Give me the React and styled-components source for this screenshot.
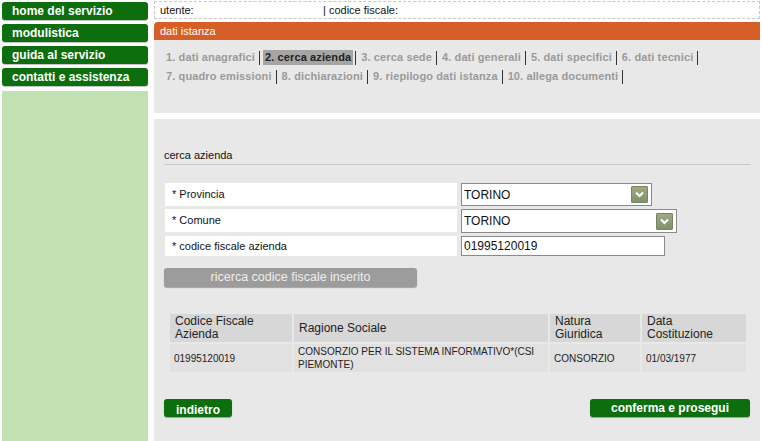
import React from "react";
import styled, { createGlobalStyle } from "styled-components";

const GlobalStyle = createGlobalStyle`
  body {
    margin: 0;
    background: #fff;
    font-family: "Liberation Sans", Arial, sans-serif;
  }
`;

const Page = styled.div`
  display: flex;
  width: 762px;
  height: 441px;
  overflow: hidden;
`;

const Sidebar = styled.div`
  width: 146px;
  margin-left: 2px;
  padding-top: 2px;
  display: flex;
  flex-direction: column;
  gap: 4px;
`;

const MenuButton = styled.div`
  height: 18px;
  line-height: 18px;
  background: #0c6e0c;
  color: #fff;
  font-weight: bold;
  font-size: 12px;
  padding-left: 10px;
  border-radius: 3px;
  box-shadow: 0 1px 1px rgba(0, 0, 0, 0.25);
`;

const SideFill = styled.div`
  flex: 1;
  margin-top: 1px;
  background: #c2e1b2;
`;

const Main = styled.div`
  width: 606px;
  margin-left: 6px;
  display: flex;
  flex-direction: column;
`;

const UserBar = styled.div`
  margin-top: 1px;
  height: 16px;
  border: 1px dashed #c8c8c8;
  display: flex;
  align-items: center;
  font-size: 11px;
  color: #111;
  padding-left: 5px;
`;

const UserField = styled.span`
  width: ${(p) => p.$w}px;
`;

const TitleBar = styled.div`
  margin-top: 3px;
  height: 18px;
  line-height: 18px;
  background: #d55f27;
  color: #fff;
  font-size: 11px;
  padding-left: 6px;
  border-radius: 4px 0 0 0;
`;

const StepsWrap = styled.div`
  background: #e8e8e8;
`;

const StepsPanel = styled.div`
  height: 63px;
  padding: 10px 0 0 10px;
  display: flex;
  flex-wrap: wrap;
  align-content: flex-start;
  row-gap: 4px;
  width: 565px;
`;

const StepItem = styled.span`
  display: inline-flex;
  align-items: center;
`;

const Step = styled.span`
  font-size: 11px;
  font-weight: bold;
  letter-spacing: 0.12px;
  color: ${(p) => (p.$active ? "#222" : "#9a9a9a")};
  background: ${(p) => (p.$active ? "#a5a5a5" : "transparent")};
  padding: 1px 2px;
  line-height: 13px;
`;

const Sep = styled.span`
  display: inline-block;
  width: 1px;
  height: 14px;
  background: #333;
  margin: 1px 3px 0 2px;
`;

const ContentPanel = styled.div`
  margin-top: 6px;
  flex: 1;
  background: #e8e8e8;
  padding: 30px 10px 0 10px;
`;

const SectionTitle = styled.div`
  font-size: 11px;
  color: #111;
  padding-bottom: 3px;
  border-bottom: 1px solid #c9c9c9;
  width: 586px;
`;

const FormGrid = styled.div`
  margin-top: 18px;
  margin-left: 1px;
  display: grid;
  grid-template-columns: 292px auto;
  row-gap: 3px;
  align-items: start;
`;

const Label = styled.div`
  background: #fff;
  font-size: 11px;
  color: #111;
  padding-left: 7px;
  height: ${(p) => p.$h}px;
  line-height: ${(p) => p.$h}px;
`;

const Field = styled.div`
  margin-left: 4px;
  width: ${(p) => p.$w}px;
  height: ${(p) => p.$h}px;
  box-sizing: border-box;
  border: 1px solid #8a8a8a;
  background: #fff;
  display: flex;
  align-items: center;
  justify-content: space-between;
  font-size: 12px;
  color: #111;
  padding: 0 3px 0 2px;
`;

const Arrow = styled.span`
  width: 15px;
  height: 15px;
  background: linear-gradient(#9ba985, #83926a);
  border: 1px solid #76845f;
  border-radius: 1px;
  display: flex;
  align-items: center;
  justify-content: center;
`;

const GrayButton = styled.div`
  margin-top: 12px;
  width: 253px;
  height: 19px;
  line-height: 19px;
  background: #9c9c9c;
  color: #eee;
  font-size: 12.5px;
  text-align: center;
  border-radius: 3px;
  box-shadow: 0 1px 1px rgba(0, 0, 0, 0.3);
`;

const ResultTable = styled.table`
  margin-top: 25px;
  margin-left: 4px;
  border-collapse: separate;
  border-spacing: 2px;
  width: 580px;
  table-layout: fixed;
`;

const Th = styled.th`
  background: #d7d7d7;
  font-weight: normal;
  font-size: 12px;
  color: #222;
  text-align: left;
  padding: 1px 5px;
  height: 26px;
  line-height: 13px;
  width: ${(p) => p.$w}px;
`;

const Td = styled.td`
  background: #e1e1e1;
  font-size: 10px;
  color: #222;
  padding: 1px 4px;
  height: 26px;
  line-height: 13px;
`;

const Footer = styled.div`
  display: flex;
  justify-content: space-between;
  margin-top: 25px;
  width: 586px;
`;

const GreenButton = styled.div`
  width: ${(p) => p.$w}px;
  height: 18px;
  line-height: ${(p) => (p.$low ? 22 : 18)}px;
  background: #0c6e0c;
  color: #fff;
  font-weight: bold;
  font-size: 12px;
  text-align: center;
  border-radius: 3px;
  box-shadow: 0 1px 1px rgba(0, 0, 0, 0.3);
`;

const Chevron = () => (
  <svg width="9" height="7" viewBox="0 0 9 7">
    <path d="M1 1.5 L4.5 5 L8 1.5" stroke="#fff" strokeWidth="2" fill="none" />
  </svg>
);

const steps = [
  ["1. dati anagrafici"],
  ["2. cerca azienda", true],
  ["3. cerca sede"],
  ["4. dati generali"],
  ["5. dati specifici"],
  ["6. dati tecnici"],
  ["7. quadro emissioni"],
  ["8. dichiarazioni"],
  ["9. riepilogo dati istanza"],
  ["10. allega documenti"],
];

export default function App() {
  return (
    <Page>
      <GlobalStyle />
      <Sidebar>
        <MenuButton>home del servizio</MenuButton>
        <MenuButton>modulistica</MenuButton>
        <MenuButton>guida al servizio</MenuButton>
        <MenuButton>contatti e assistenza</MenuButton>
        <SideFill />
      </Sidebar>
      <Main>
        <UserBar>
          <UserField $w={163}>utente:</UserField>
          <UserField>| codice fiscale:</UserField>
        </UserBar>
        <TitleBar>dati istanza</TitleBar>
        <StepsWrap>
          <StepsPanel>
            {steps.map(([label, active]) => (
              <StepItem key={label}>
                <Step $active={active}>{label}</Step>
                <Sep />
              </StepItem>
            ))}
          </StepsPanel>
        </StepsWrap>
        <ContentPanel>
          <SectionTitle>cerca azienda</SectionTitle>
          <FormGrid>
            <Label $h={23}>* Provincia</Label>
            <Field $w={191} $h={23}>
              TORINO
              <Arrow>
                <Chevron />
              </Arrow>
            </Field>
            <Label $h={23}>* Comune</Label>
            <Field $w={216} $h={24}>
              TORINO
              <Arrow>
                <Chevron />
              </Arrow>
            </Field>
            <Label $h={20}>* codice fiscale azienda</Label>
            <Field $w={204} $h={20}>
              01995120019
            </Field>
          </FormGrid>
          <GrayButton>ricerca codice fiscale inserito</GrayButton>
          <ResultTable>
            <thead>
              <tr>
                <Th $w={112}>Codice Fiscale Azienda</Th>
                <Th $w={244}>Ragione Sociale</Th>
                <Th $w={80}>Natura Giuridica</Th>
                <Th>Data Costituzione</Th>
              </tr>
            </thead>
            <tbody>
              <tr>
                <Td>01995120019</Td>
                <Td>CONSORZIO PER IL SISTEMA INFORMATIVO*(CSI PIEMONTE)</Td>
                <Td>CONSORZIO</Td>
                <Td>01/03/1977</Td>
              </tr>
            </tbody>
          </ResultTable>
          <Footer>
            <GreenButton $w={68} $low>indietro</GreenButton>
            <GreenButton $w={160}>conferma e prosegui</GreenButton>
          </Footer>
        </ContentPanel>
      </Main>
    </Page>
  );
}
